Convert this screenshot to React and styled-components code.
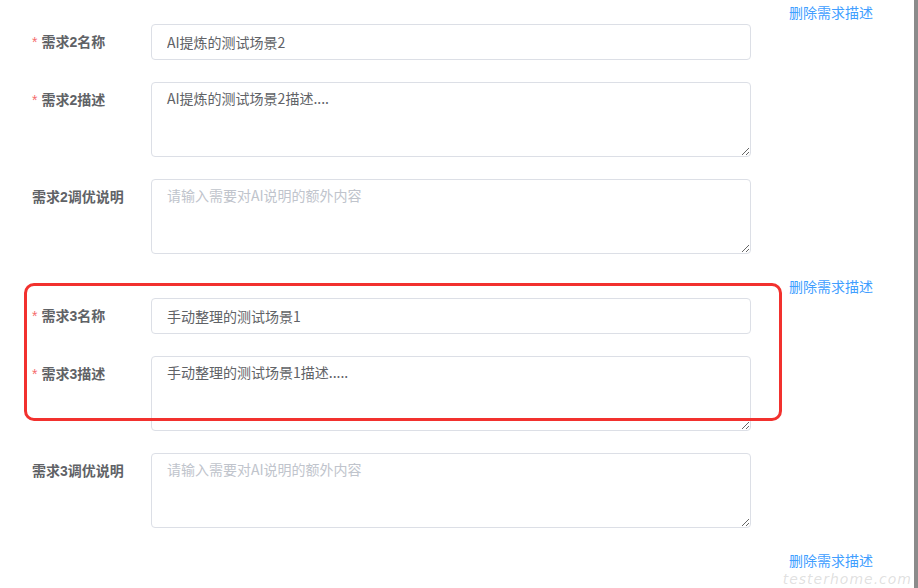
import React from 'react';
import styled, { createGlobalStyle } from 'styled-components';

const GlobalStyle = createGlobalStyle`
  html, body {
    margin: 0;
    padding: 0;
    background: #fff;
    overflow: hidden;
  }
  body {
    font-family: "Liberation Sans", "Noto Sans CJK SC", sans-serif;
  }
`;

const Page = styled.div`
  display: flex;
  width: 918px;
  height: 588px;
  overflow: hidden;
`;

const Main = styled.div`
  position: relative;
  flex: 1;
  padding-top: 2px;
`;

const EdgeBar = styled.div`
  width: 4px;
  background: #8b8b8b;
`;

const Group = styled.section`
  display: flex;
  flex-direction: column;
`;

const GroupHeader = styled.div`
  height: 22px;
  display: flex;
  align-items: center;
  padding-left: 789px;
`;

const DeleteLink = styled.a`
  font-size: 14px;
  line-height: 20px;
  margin-top: -2px;
  color: #409eff;
  cursor: pointer;
  white-space: nowrap;
  font-family: "Noto Sans CJK SC", sans-serif;
`;

const Items = styled.div`
  display: flex;
  flex-direction: column;
  gap: 22px;
  padding-bottom: 22px;
`;

const Item = styled.div`
  display: flex;
  align-items: flex-start;
`;

const Label = styled.label`
  width: 151px;
  box-sizing: border-box;
  padding-left: 32px;
  line-height: 36px;
  font-size: 14px;
  font-weight: 700;
  color: #606266;
  white-space: nowrap;
`;

const Star = styled.span`
  color: #f56c6c;
  font-weight: 400;
  margin-right: 4px;
`;

const fieldBase = `
  width: 600px;
  box-sizing: border-box;
  border: 1px solid #dcdfe6;
  border-radius: 4px;
  background: #fff;
  color: #606266;
  font-size: 14px;
  font-family: "Noto Sans CJK SC", "Liberation Sans", sans-serif;
  outline: none;
  &::placeholder { color: #c0c4cc; }
`;

const TextInput = styled.input`
  ${fieldBase}
  height: 36px;
  padding: 0 15px;
`;

const TextArea = styled.textarea`
  ${fieldBase}
  height: 75px;
  padding: 5px 15px;
  line-height: 1.5;
  resize: vertical;
  display: block;
`;

const Highlight = styled.div`
  position: absolute;
  left: 24px;
  top: 283px;
  width: 758px;
  height: 138px;
  box-sizing: border-box;
  border: 3px solid #f2312e;
  border-radius: 10px;
  pointer-events: none;
`;

const Watermark = styled.div`
  position: absolute;
  right: 2px;
  bottom: 2px;
  font-family: "DejaVu Sans", sans-serif;
  font-size: 14px;
  line-height: 13px;
  font-style: italic;
  font-weight: 200;
  letter-spacing: 1px;
  color: rgba(150, 150, 150, 0.3);
  pointer-events: none;
`;

const Field = ({ label, required, value, placeholder, multiline }) => (
  <Item>
    <Label>
      {required && <Star>*</Star>}
      {label}
    </Label>
    {multiline ? (
      <TextArea readOnly value={value} placeholder={placeholder} />
    ) : (
      <TextInput readOnly value={value} placeholder={placeholder} />
    )}
  </Item>
);

const PH = '请输入需要对AI说明的额外内容';

const groups = [
  {
    n: 2,
    name: 'AI提炼的测试场景2',
    desc: 'AI提炼的测试场景2描述....',
  },
  {
    n: 3,
    name: '手动整理的测试场景1',
    desc: '手动整理的测试场景1描述.....',
  },
];

export default function App() {
  return (
    <>
      <GlobalStyle />
      <Page>
        <Main>
          {groups.map((g) => (
            <Group key={g.n}>
              <GroupHeader>
                <DeleteLink>删除需求描述</DeleteLink>
              </GroupHeader>
              <Items>
                <Field required label={`需求${g.n}名称`} value={g.name} />
                <Field required multiline label={`需求${g.n}描述`} value={g.desc} />
                <Field multiline label={`需求${g.n}调优说明`} value="" placeholder={PH} />
              </Items>
            </Group>
          ))}
          <GroupHeader>
            <DeleteLink>删除需求描述</DeleteLink>
          </GroupHeader>
          <Highlight />
          <Watermark>testerhome.com</Watermark>
        </Main>
        <EdgeBar />
      </Page>
    </>
  );
}
